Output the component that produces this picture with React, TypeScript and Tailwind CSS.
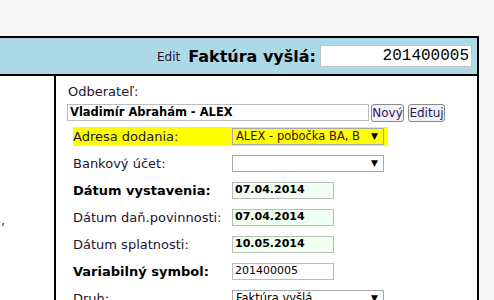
import React from 'react'

const Arrow = () => (
    <span className="text-[9px] leading-none text-black">▼</span>
)

const rows = [
    { label: 'Bankový účet:', bold: false, kind: 'select', value: '' },
    { label: 'Dátum vystavenia:', bold: true, kind: 'date', value: '07.04.2014' },
    { label: 'Dátum daň.povinnosti:', bold: false, kind: 'date', value: '07.04.2014' },
    { label: 'Dátum splatnosti:', bold: false, kind: 'date', value: '10.05.2014' },
    { label: 'Variabilný symbol:', bold: true, kind: 'text', value: '201400005' },
    { label: 'Druh:', bold: false, kind: 'select', value: 'Faktúra vyšlá' },
]

const App = () => {
    return (
        <div className="h-[300px] w-[494px] overflow-hidden bg-[#f7f7f7] font-['DejaVu_Sans',Verdana,sans-serif] text-[#1c1430]">
            <div className="h-[36px]" />
            <div className="w-[479px] border-t-2 border-r-2 border-black bg-white">
                {/* header */}
                <div className="h-[38px] bg-[#add8e6] border-b-2 border-black flex items-center justify-end pr-[5px]">
                    <span className="text-[12px] mt-[1px]">Edit</span>
                    <span className="ml-[8px] text-[16px] font-bold text-black mt-[2px]">Faktúra vyšlá:</span>
                    <div className="ml-[4px] w-[152px] h-[22px] border border-[#c4c4c4] bg-white flex items-center justify-end pr-[2px] font-['Liberation_Mono',monospace] text-[16px] text-black">
                        201400005
                    </div>
                </div>

                {/* body */}
                <div className="flex h-[230px]">
                    <div className="w-[56px] border-r-2 border-black overflow-hidden pt-[137px] pl-[1px] text-[13px] leading-[16px] text-[#2a2a60]">
                        ,
                    </div>
                    <div className="flex-1 pl-[11px] pt-[8px]">
                        <div className="text-[13px] leading-[16px] pl-[1px]">Odberateľ:</div>
                        <div className="mt-[4px] flex items-center h-[17px]">
                            <div className="w-[302px] h-[17px] border border-[#bcbcbc] flex items-center pl-[2px] text-[11.5px] font-bold text-black">
                                Vladimír Abrahám - ALEX
                            </div>
                            <button className="ml-[2px] h-[18px] w-[33px] border border-[#8a8a8a] rounded-[3px] bg-[#f2f2f2] text-[12px] leading-none text-[#35106a] px-0">
                                Nový
                            </button>
                            <button className="ml-[4px] h-[18px] w-[37px] border border-[#8a8a8a] rounded-[3px] bg-[#f2f2f2] text-[12px] leading-none text-[#1e1a60] px-0">
                                Edituj
                            </button>
                        </div>

                        <div className="mt-[6px] ml-[6px] flex flex-col gap-[8px]">
                            <div className="flex h-[19px] w-[315px] bg-[#ffff00]">
                                <div className="w-[159px] text-[13px] leading-[16px] pt-[2px]">Adresa dodania:</div>
                                <div className="mt-[1px] w-[152px] h-[17px] border border-[#a8a8a8] flex items-center justify-between pl-[3px] pr-[5px] text-[11.5px] text-[#3a0a0a] overflow-hidden whitespace-nowrap">
                                    <span className="overflow-hidden">ALEX - pobočka BA, B</span>
                                    <Arrow />
                                </div>
                            </div>
                            {rows.map((r) => (
                                <div key={r.label} className="flex h-[19px]">
                                    <div className={`w-[159px] text-[13px] leading-[16px] pt-[2px] ${r.bold ? 'font-bold text-black' : ''}`}>
                                        {r.label}
                                    </div>
                                    {r.kind === 'select' ? (
                                        <div className="mt-[1px] w-[152px] h-[17px] border border-[#a8a8a8] bg-white flex items-center justify-between pl-[3px] pr-[5px] text-[11.5px] text-black">
                                            <span>{r.value}</span>
                                            <Arrow />
                                        </div>
                                    ) : (
                                        <div
                                            className={`mt-[1px] w-[102px] h-[17px] border border-[#bcbcbc] flex items-center pl-[2px] text-[11px] text-black ${
                                                r.kind === 'date' ? 'bg-[#effff0] font-bold' : 'bg-white'
                                            }`}
                                        >
                                            {r.value}
                                        </div>
                                    )}
                                </div>
                            ))}
                        </div>
                    </div>
                </div>
            </div>
        </div>
    )
}

export default App
